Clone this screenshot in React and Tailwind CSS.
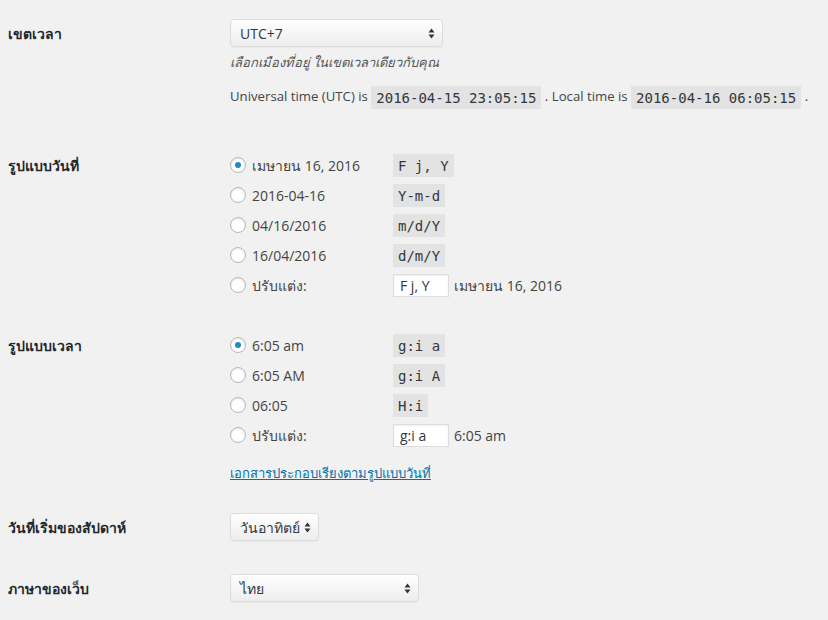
import React from "react";

const dateFormats = [
  { label: "เมษายน 16, 2016", code: "F j, Y", checked: true },
  { label: "2016-04-16", code: "Y-m-d" },
  { label: "04/16/2016", code: "m/d/Y" },
  { label: "16/04/2016", code: "d/m/Y" },
];

const timeFormats = [
  { label: "6:05 am", code: "g:i a", checked: true },
  { label: "6:05 AM", code: "g:i A" },
  { label: "06:05", code: "H:i" },
];

function Radio({ checked }) {
  return (
    <span className="w-4 h-4 mr-[6px] rounded-full border border-[#b4b9be] bg-white shadow-[inset_0_1px_2px_rgba(0,0,0,0.1)] flex items-center justify-center shrink-0">
      {checked && <span className="w-[6px] h-[6px] rounded-full bg-[#1e8cbe]" />}
    </span>
  );
}

function Code({ children }) {
  return (
    <code className="inline-block bg-[#e3e3e3] px-[5px] pt-[3px] pb-[2px] text-[14px] leading-[18px] text-[#32373c] font-['DejaVu_Sans_Mono',monospace]">
      {children}
    </code>
  );
}

function Select({ value, width }) {
  return (
    <div
      className={`${width} h-[28px] rounded-[4px] border border-[#dcdcdc] bg-gradient-to-b from-white to-[#ededed] shadow-[inset_0_1px_0_#fff,0_1px_1px_rgba(0,0,0,0.04)] flex items-center justify-between pl-[9px] pr-[7px] text-[14px] text-[#32373c]`}
    >
      <span>{value}</span>
      <svg width="7" height="11" viewBox="0 0 7 11">
        <path d="M3.5 0.5 L6.5 4.5 L0.5 4.5 Z" fill="#333" />
        <path d="M3.5 10.5 L6.5 6.5 L0.5 6.5 Z" fill="#333" />
      </svg>
    </div>
  );
}

function Label({ children, h }) {
  return (
    <div className={`w-[222px] shrink-0 ${h} flex items-center text-[14px] font-bold text-[#23282d]`}>
      {children}
    </div>
  );
}

function FormatList({ items, custom, preview }) {
  return (
    <div>
      {items.map((it) => (
        <div key={it.code} className="h-[30px] flex items-center">
          <Radio checked={it.checked} />
          <span className="w-[141px] text-[#444]">{it.label}</span>
          <Code>{it.code}</Code>
        </div>
      ))}
      <div className="h-[30px] flex items-center">
        <Radio />
        <span className="w-[141px] text-[#444]">ปรับแต่ง:</span>
        <div className="w-[56px] h-[23px] border border-[#ddd] bg-white shadow-[inset_0_1px_2px_rgba(0,0,0,0.07)] px-[6px] flex items-center text-[#32373c]">
          {custom}
        </div>
        <span className="ml-[5px] text-[#444]">{preview}</span>
      </div>
    </div>
  );
}

export default function App() {
  return (
    <div className="min-h-screen w-[828px] h-[620px] overflow-hidden bg-[#f1f1f1] pl-2 pt-[19px] text-[14px] text-[#444] font-['Open_Sans','Noto_Sans',sans-serif]">
      {/* Timezone */}
      <div className="flex items-start">
        <Label h="h-[28px]">เขตเวลา</Label>
        <div>
          <Select value="UTC+7" width="w-[213px]" />
          <p className="mt-[5px] h-[20px] leading-[20px] italic text-[#555] text-[13px]">
            เลือกเมืองที่อยู่ ในเขตเวลาเดียวกับคุณ
          </p>
          <p className="mt-[13px] h-[24px] flex items-center whitespace-nowrap text-[13.2px]">
            Universal time (UTC) is&nbsp;<Code>2016-04-15 23:05:15</Code>&nbsp;. Local time is&nbsp;
            <Code>2016-04-16 06:05:15</Code>&nbsp;.
          </p>
        </div>
      </div>

      {/* Date format */}
      <div className="flex items-start mt-[41px]">
        <Label h="h-[30px]">รูปแบบวันที่</Label>
        <FormatList items={dateFormats} custom="F j, Y" preview="เมษายน 16, 2016" />
      </div>

      {/* Time format */}
      <div className="flex items-start mt-[30px]">
        <Label h="h-[30px]">รูปแบบเวลา</Label>
        <div>
          <FormatList items={timeFormats} custom="g:i a" preview="6:05 am" />
          <a href="#" className="block mt-[13px] h-[20px] leading-[20px] text-[13px] text-[#0073aa] underline">
            เอกสารประกอบเรียงตามรูปแบบวันที่
          </a>
        </div>
      </div>

      {/* Week start */}
      <div className="flex items-start mt-[30px]">
        <Label h="h-[28px]">วันที่เริ่มของสัปดาห์</Label>
        <Select value="วันอาทิตย์" width="w-[89px]" />
      </div>

      {/* Site language */}
      <div className="flex items-start mt-[33px]">
        <Label h="h-[28px]">ภาษาของเว็บ</Label>
        <Select value="ไทย" width="w-[189px]" />
      </div>
    </div>
  );
}
